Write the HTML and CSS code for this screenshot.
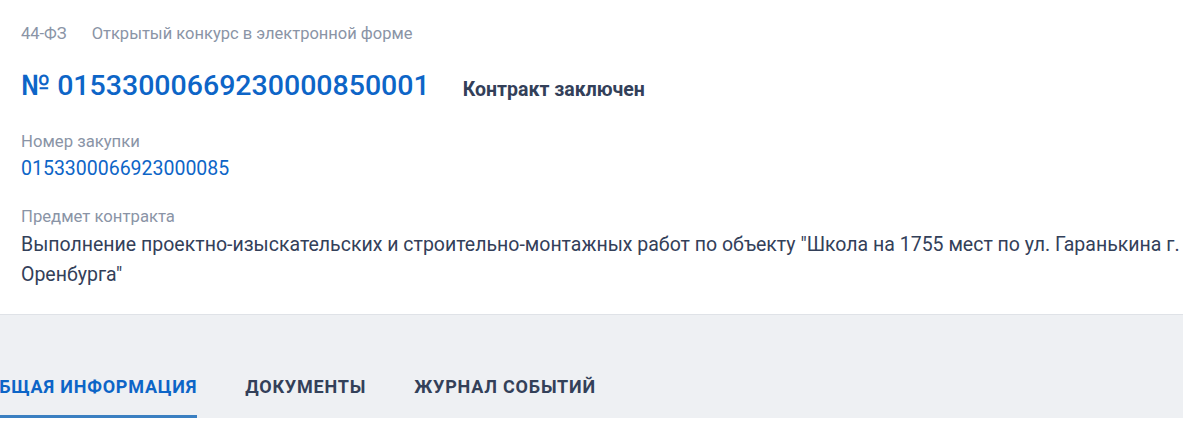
FILE: index.html
```html
<!DOCTYPE html>
<html lang="ru">
<head>
<meta charset="utf-8">
<link rel="stylesheet" href="styles.css">
</head>
<body>
<div class="card">
  <div class="meta">
    <span class="meta-law">44-ФЗ</span>
    <span class="meta-type">Открытый конкурс в электронной форме</span>
  </div>
  <div class="title-row">
    <h1 class="title">№ 01533000669230000850001</h1>
    <span class="status">Контракт заключен</span>
  </div>
  <div class="field">
    <div class="field-label">Номер закупки</div>
    <a class="field-link" href="#">0153300066923000085</a>
  </div>
  <div class="field">
    <div class="field-label">Предмет контракта</div>
    <div class="field-text">Выполнение проектно-изыскательских и строительно-монтажных работ по объекту "Школа на 1755 мест по ул. Гаранькина г. Оренбурга"</div>
  </div>
</div>
<nav class="tabs">
  <div class="tab-list">
    <a class="tab active" href="#">Общая информация</a>
    <a class="tab" href="#">Документы</a>
    <a class="tab" href="#">Журнал событий</a>
  </div>
</nav>
</body>
</html>
```

FILE: styles.css
```css
* { box-sizing: border-box; }
html, body { margin: 0; padding: 0; background: #fff; }
body {
  font-family: Roboto, "Noto Sans", sans-serif;
  color: #334059;
  width: 1183px;
  overflow: hidden;
}
.card {
  padding: 24px 0 0 21px;
  height: 315px;
  border-bottom: 1px solid #dfe2e7;
}
.meta {
  display: flex;
  gap: 25px;
  font-size: 16.5px;
  line-height: 20px;
  color: #8a94a6;
}
.title-row {
  display: flex;
  align-items: center;
  gap: 33px;
  margin-top: 24px;
}
.title {
  margin: 0;
  font-size: 28.5px;
  font-weight: 500;
  line-height: 36px;
  color: #0d65c7;
}
.status {
  padding-top: 6px;
  font-size: 19.5px;
  font-weight: 700;
  color: #334059;
}
.field { margin-top: 27px; }
.field + .field { margin-top: 24px; }
.field-label {
  font-size: 16.7px;
  line-height: 22px;
  color: #8a94a6;
}
.field-link {
  display: block;
  margin-top: 3px;
  font-size: 19.5px;
  line-height: 26px;
  color: #0d65c7;
  text-decoration: none;
}
.field-text {
  margin-top: 2px;
  font-size: 19.5px;
  line-height: 30px;
  color: #334059;
}
.tabs {
  background: #eef0f3;
  height: 103px;
  display: flex;
  align-items: flex-end;
  overflow: hidden;
}
.tab-list {
  display: flex;
  gap: 48px;
  margin-left: -14px;
}
.tab {
  display: block;
  padding-bottom: 18px;
  font-size: 18px;
  font-weight: 700;
  text-transform: uppercase;
  letter-spacing: 0.8px;
  color: #334059;
  text-decoration: none;
  border-bottom: 3px solid transparent;
  line-height: 20px;
}
.tab.active {
  color: #0d65c7;
  border-bottom-color: #3a7fc1;
}
```
